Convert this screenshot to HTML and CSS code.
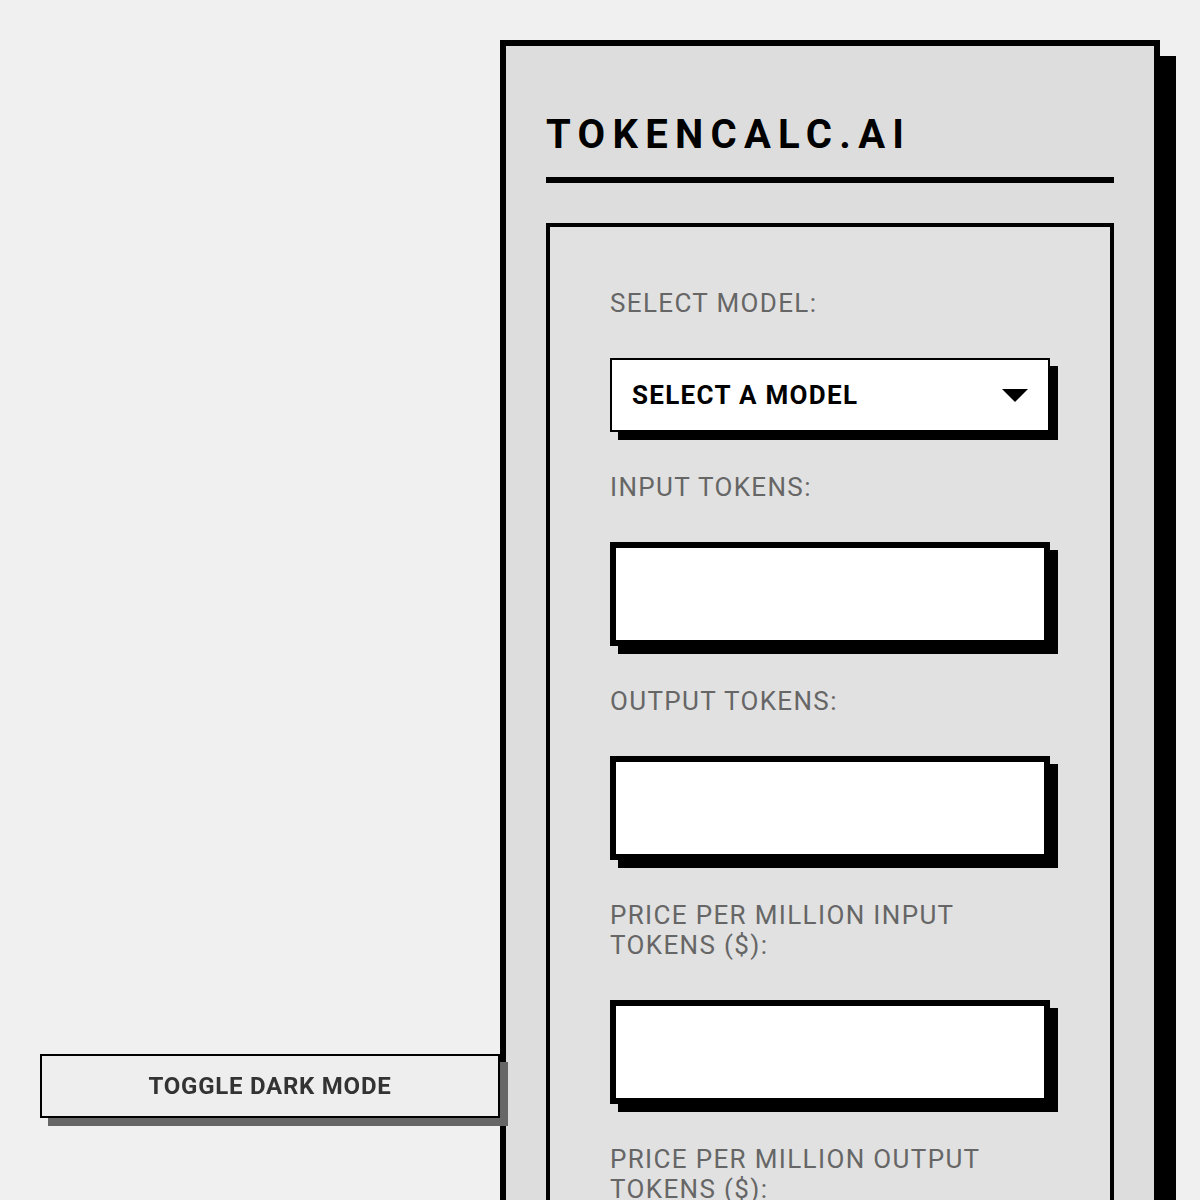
FILE: index.html
```html
<!DOCTYPE html>
<html lang="en">
<head>
<meta charset="utf-8">
<title>TokenCalc.ai</title>
<link rel="stylesheet" href="styles.css">
</head>
<body>
<main class="page">
  <section class="panel">
    <h1 class="title">TOKENCALC.AI</h1>
    <div class="calc">
      <label class="field-label" for="model">SELECT MODEL:</label>
      <div class="select-wrap">
        <select id="model" class="select">
          <option>SELECT A MODEL</option>
        </select>
        <svg class="select-arrow" width="26" height="13" viewBox="0 0 26 13" aria-hidden="true"><polygon points="0,0 26,0 13,13" fill="#000"/></svg>
      </div>
      <label class="field-label" for="inTok">INPUT TOKENS:</label>
      <input id="inTok" class="num-input" type="text">
      <label class="field-label" for="outTok">OUTPUT TOKENS:</label>
      <input id="outTok" class="num-input" type="text">
      <label class="field-label" for="inPrice">PRICE PER MILLION INPUT TOKENS ($):</label>
      <input id="inPrice" class="num-input" type="text">
      <label class="field-label" for="outPrice">PRICE PER MILLION OUTPUT TOKENS ($):</label>
      <input id="outPrice" class="num-input" type="text">
    </div>
  </section>
</main>
<button class="toggle" type="button">TOGGLE DARK MODE</button>
</body>
</html>
```
FILE: styles.css
```css
html, body {
  margin: 0;
  padding: 0;
}
body {
  background: #f0f0f0;
  font-family: Roboto, "Liberation Sans", sans-serif;
  color: #000;
}
.page {
  display: flex;
  justify-content: flex-end;
  padding: 40px;
}
.panel {
  width: 660px;
  box-sizing: border-box;
  background: #dddddd;
  border: 6px solid #000;
  box-shadow: 16px 16px 0 #000;
  padding: 40px;
}
.title {
  margin: 25px 0 40px;
  padding-bottom: 19px;
  border-bottom: 6px solid #000;
  font-size: 40px;
  font-weight: 700;
  letter-spacing: 7.3px;
  line-height: 47px;
}
.calc {
  background: #e1e1e1;
  border: 4px solid #000;
  padding: 61px 60px 60px;
  display: flex;
  flex-direction: column;
}
.field-label {
  display: block;
  color: #666;
  font-size: 26px;
  line-height: 30px;
  letter-spacing: 1.35px;
  margin-bottom: 40px;
}
.select-wrap {
  position: relative;
  margin-bottom: 40px;
}
.select {
  -webkit-appearance: none;
  appearance: none;
  display: block;
  width: 100%;
  height: 74px;
  box-sizing: border-box;
  border: 2px solid #000;
  border-radius: 0;
  background: #fff;
  box-shadow: 8px 8px 0 #000;
  padding: 0 60px 0 20px;
  font-family: Roboto, "Liberation Sans", sans-serif;
  font-size: 26px;
  font-weight: 700;
  letter-spacing: 1.3px;
  color: #000;
}
.select-arrow {
  position: absolute;
  right: 22px;
  top: 31px;
  pointer-events: none;
}
.num-input {
  display: block;
  width: 100%;
  height: 104px;
  box-sizing: border-box;
  border: 6px solid #000;
  border-radius: 0;
  background: #fff;
  box-shadow: 8px 8px 0 #000;
  margin: 0 0 40px;
  padding: 0 20px;
  font-family: Roboto, "Liberation Sans", sans-serif;
  font-size: 26px;
  outline: none;
}
.num-input:last-child {
  margin-bottom: 0;
}
.toggle {
  position: fixed;
  left: 40px;
  bottom: 82px;
  width: 460px;
  height: 64px;
  box-sizing: border-box;
  background: #eeeeee;
  border: 2px solid #000;
  border-radius: 0;
  box-shadow: 8px 8px 0 #666;
  font-family: Roboto, "Liberation Sans", sans-serif;
  font-size: 24px;
  font-weight: 700;
  letter-spacing: 0.75px;
  color: #333;
  padding: 0;
}
```
